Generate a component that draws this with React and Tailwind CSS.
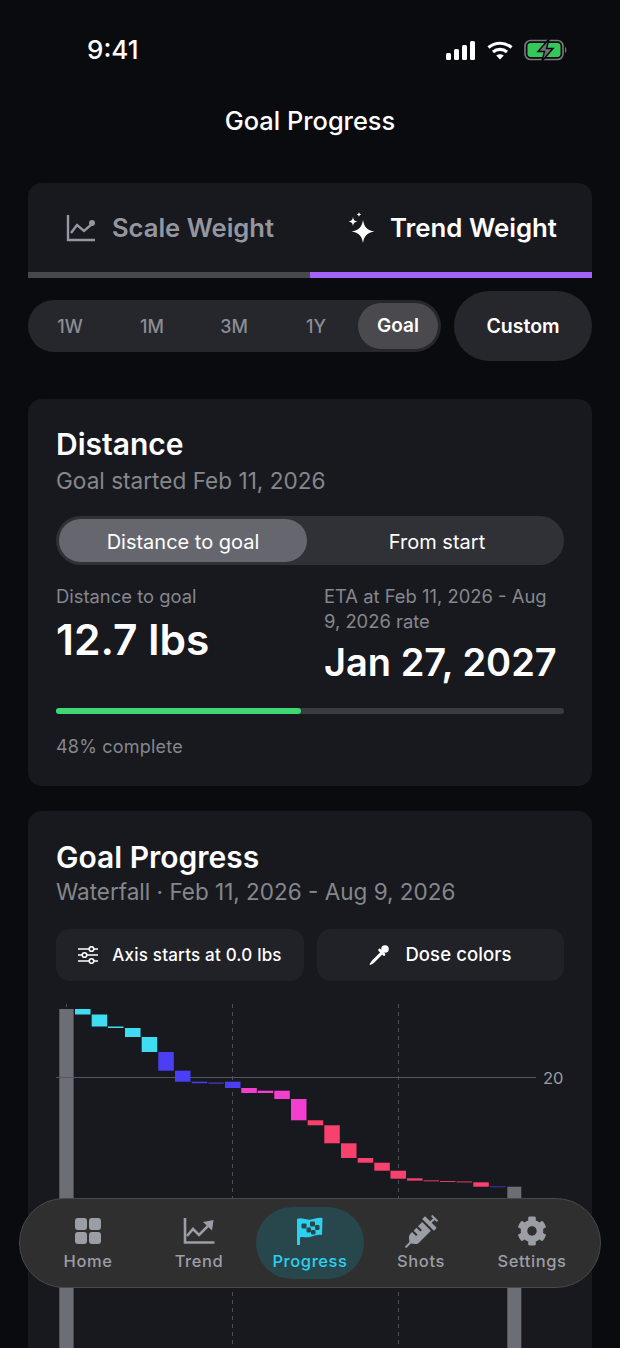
import React from "react";
import { FaCog, FaSyringe } from "react-icons/fa";

const font = { fontFamily: "Inter, sans-serif" };

const ranges = ["1W", "1M", "3M", "1Y"];

// [x, y, w, h, colour] in chart coordinates (chart box starts at page 56,1000)
const cyan = "#3fdcf2";
const blue = "#4a3ff5";
const pink = "#f23fd0";
const red = "#f9416f";
const bars = [
  [19, 9, 15.5, 5.5, cyan],
  [35.7, 14.5, 15.5, 12, cyan],
  [52, 26.5, 15.5, 1.5, cyan],
  [69, 28, 15.5, 9, cyan],
  [85.7, 37, 15.5, 15, cyan],
  [102.3, 52, 15.5, 18.7, blue],
  [119, 70.7, 15.5, 11, blue],
  [135.7, 81.7, 15.5, 1.5, blue],
  [152.3, 82.6, 15.5, 1, blue],
  [169, 81.7, 15.5, 6.3, blue],
  [185.3, 88, 15.5, 5, pink],
  [201.7, 90.7, 15.5, 2.3, pink],
  [218.3, 90.7, 15.5, 8.3, pink],
  [235, 99, 15.5, 21.3, pink],
  [251.7, 120.3, 15.5, 5, red],
  [268.3, 125.3, 15.5, 18, red],
  [285, 143.3, 15.5, 14.7, red],
  [301.7, 158, 15.5, 4.7, red],
  [318.3, 162.7, 15.5, 8, red],
  [334.5, 170.7, 15.5, 8, red],
  [351, 178.3, 15.5, 2.3, red],
  [367.5, 180.4, 15.5, 0.9, red],
  [384, 181, 15.5, 0.9, red],
  [400.5, 181.5, 15.5, 0.9, red],
  [417.3, 182.3, 15.5, 4.4, red],
  [434, 186.5, 15.5, 0.7, blue],
];

function StatusIcons() {
  return (
    <div className="flex items-center gap-[11px]">
      <svg width="30" height="19" viewBox="0 0 30 19" fill="white">
        <rect x="0" y="12" width="5" height="7" rx="1.5" />
        <rect x="8" y="8" width="5" height="11" rx="1.5" />
        <rect x="16" y="4" width="5" height="15" rx="1.5" />
        <rect x="24" y="0" width="5" height="19" rx="1.5" />
      </svg>
      <svg width="26" height="19" viewBox="0 0 26 19" fill="none" stroke="white" strokeWidth="3.2">
        <path d="M1.5 6.5C8 .8 18 .8 24.500 6.500" />
        <path d="M6 11c4-3.400 10-3.400 14 0" />
        <path d="M13 18.500l-3.800-3.900c2.200-1.700 5.400-1.700 7.600 0z" fill="white" stroke="none" />
      </svg>
      <svg width="43" height="22" viewBox="0 0 43 22">
        <rect x="1" y="1.500" width="38" height="19" rx="5.500" fill="none" stroke="#77797c" strokeWidth="1.600" />
        <rect x="3.500" y="4" width="33" height="14" rx="3.200" fill="#35c759" />
        <path d="M41 8c1.800.5 1.800 5.500 0 6z" fill="#77797c" />
        <path d="M25 0l-11 12.500h6.500L18 22l11-12.500h-6.500z" fill="#6f7173" stroke="#0a0b0e" strokeWidth="1.500" />
      </svg>
    </div>
  );
}

function SparkleIcon() {
  return (
    <svg width="28" height="32" viewBox="0 0 28 32" fill="white">
      <path d="M15 8c1.200 7.200 4.200 10.200 11.500 11.500C19.200 20.800 16.200 23.800 15 31c-1.200-7.200-4.200-10.200-11.500-11.500C10.800 18.200 13.800 15.200 15 8z" />
      <path d="M5 5c.5 3 1.500 4 4.500 4.500C6.500 10 5.500 11 5 14c-.5-3-1.500-4-4.500-4.500C3.500 9 4.500 8 5 5z" />
      <path d="M11 0c.3 1.600.8 2.100 2.400 2.400C11.800 2.700 11.300 3.200 11 4.800c-.3-1.600-.8-2.100-2.400-2.400C10.200 2.100 10.700 1.600 11 0z" />
    </svg>
  );
}

function ScaleIcon() {
  return (
    <svg width="30" height="28" viewBox="0 0 30 28" fill="none" stroke="#9496a0" strokeWidth="2.400">
      <path d="M2 1v25h27" />
      <path d="M5 19l6-8 7 6 8-7" />
      <circle cx="26" cy="9" r="1.800" fill="#9496a0" />
    </svg>
  );
}

function SlidersIcon() {
  return (
    <svg width="20" height="18" viewBox="0 0 20 18" fill="none" stroke="white" strokeWidth="1.600">
      <path d="M0 3h11M16 3h4M0 9h4M9 9h11M0 15h11M16 15h4" />
      <circle cx="13.500" cy="3" r="2.300" />
      <circle cx="6.500" cy="9" r="2.300" />
      <circle cx="13.500" cy="15" r="2.300" />
    </svg>
  );
}

function DropperIcon() {
  return (
    <svg width="20" height="20" viewBox="0 0 20 20" fill="white">
      <circle cx="16" cy="4" r="3.800" />
      <path d="M10.500 5l4.500 4.500" stroke="white" strokeWidth="2.600" strokeLinecap="round" />
      <path d="M12 7.500L3.500 16 1 19.500 4.500 17.500 13 9z" stroke="white" strokeWidth="1.200" />
    </svg>
  );
}

function TrendIcon() {
  return (
    <svg width="32" height="28" viewBox="0 0 32 28" fill="none" stroke="#9c9ea6" strokeWidth="2.600">
      <path d="M2 1v24.500h29.500" />
      <path d="M4 19l6-7 6 6 10-10" />
      <path d="M20 5l10.500-2L29 13.500z" fill="#9c9ea6" stroke="none" />
    </svg>
  );
}

function HomeIcon() {
  return (
    <svg width="26" height="26" viewBox="0 0 26 26" fill="#9c9ea6">
      <rect x="0" y="0" width="12" height="12" rx="3" />
      <rect x="14" y="0" width="12" height="12" rx="3" />
      <rect x="0" y="14" width="12" height="12" rx="3" />
      <rect x="14" y="14" width="12" height="12" rx="3" />
    </svg>
  );
}

function FlagIcon() {
  return (
    <svg width="26" height="28" viewBox="0 0 26 28">
      <path
        d="M0 2C5 0 9 3.500 14 2.500 18 1.700 22 0 25.500 1.200L25 18C21 17 17 19 13 20 9 21 6 19 3 20.500V28H0z"
        fill="#2fd0ee"
      />
      <g fill="#27474d">
        <rect x="4.500" y="6.500" width="5" height="5" rx="1" />
        <rect x="13" y="4.500" width="5" height="5" rx="1" />
        <rect x="9.500" y="10.500" width="4.500" height="5" rx="1" />
        <rect x="18" y="8" width="4.500" height="5" rx="1" />
        <rect x="14" y="13" width="4.500" height="4.500" rx="1" />
      </g>
    </svg>
  );
}

function NavItem({ label, active, children }) {
  return (
    <div
      className={`h-[72px] w-[108px] flex flex-col items-center justify-end pb-[8px] rounded-[36px] ${
        active ? "bg-[#27474d] text-[#2fd0ee]" : "text-[#9c9ea6]"
      }`}
    >
      <div className="h-[30px] flex items-center justify-center">{children}</div>
      <span className="mt-[5px] text-[16.500px] leading-[20px] font-medium tracking-[0.6px]">{label}</span>
    </div>
  );
}

function Chart() {
  return (
    <div className="mt-[19px] h-[400px]">
      <svg width="510" height="400" viewBox="0 0 510 400">
        <path d="M176.500 4V400M342.500 4V400" stroke="#4d4f54" strokeWidth="1" strokeDasharray="4 4" />
        <path d="M10.500 4v3" stroke="#4d4f54" />
        <rect x="3.300" y="9" width="14.300" height="391" fill="#6c6e76" />
        <rect x="451.300" y="186.700" width="14" height="214" fill="#6c6e76" />
        <path d="M0 77.500H480" stroke="#55575b" strokeWidth="1" />
        {bars.map(([x, y, w, h, color], i) => (
          <rect key={i} x={x} y={y} width={w} height={h} fill={color} />
        ))}
        <text x="487" y="84" fill="#9a9ca2" fontSize="16.500" fontFamily="Inter, sans-serif">20</text>
      </svg>
    </div>
  );
}

export default function App() {
  return (
    <div style={font} className="relative w-[620px] h-[1348px] overflow-hidden bg-[#0a0b0e] text-white">
      <div className="h-[100px] pl-[87px] pr-[53px] flex items-center justify-between">
        <span className="text-[26px] leading-[32px] font-medium">9:41</span>
        <StatusIcons />
      </div>

      <h1 className="-mt-px text-center text-[25.400px] leading-[44px] font-medium">Goal Progress</h1>

      <div className="mx-[28px] mt-[40px]">
        <div className="h-[95px] bg-[#18191e] rounded-t-[14px] flex flex-col">
          <div className="flex-1 flex">
            <div className="w-1/2 flex items-center justify-center gap-[16px] text-[#9496a0] pl-[2px]">
              <ScaleIcon />
              <span className="text-[25.600px] font-semibold pt-[2px]">Scale Weight</span>
            </div>
            <div className="w-1/2 flex items-center justify-center gap-[14px] pl-[3px]">
              <SparkleIcon />
              <span className="text-[25.800px] font-semibold pt-[2px]">Trend Weight</span>
            </div>
          </div>
          <div className="flex h-[6px]">
            <div className="w-1/2 bg-[#47484c]" />
            <div className="w-1/2 bg-[#a463f8]" />
          </div>
        </div>

        <div className="mt-[13px] flex items-center gap-[13px]">
          <div className="w-[413px] h-[52px] rounded-full bg-[#26272c] flex items-center pl-[1px] pr-[3px]">
            {ranges.map((r) => (
              <span key={r} className="w-[82px] text-center text-[18px] font-medium text-[#8b8d93] pt-px">{r}</span>
            ))}
            <span className="w-[80px] h-[46px] ml-[1px] rounded-full bg-[#49494e] flex items-center justify-center text-[19px] font-semibold pt-px">Goal</span>
          </div>
          <div className="w-[139px] h-[70px] rounded-full bg-[#26272c] flex items-center justify-center text-[19.500px] font-semibold pt-px">Custom</div>
        </div>

        <div className="mt-[38px] h-[387px] bg-[#18191e] rounded-[14px] px-[28px] pt-[27px]">
          <h2 className="text-[30px] leading-[36px] font-semibold">Distance</h2>
          <p className="mt-[1px] text-[22.600px] leading-[36px] text-[#85878d]">Goal started Feb 11, 2026</p>

          <div className="mt-[17px] h-[49px] rounded-full bg-[#303137] flex items-center p-[3px] text-[20px]">
            <div className="w-[248px] h-[43px] rounded-full bg-[#66676e] flex items-center justify-center pt-[2px]">Distance to goal</div>
            <div className="flex-1 text-center pt-[2px] pl-[6px]">From start</div>
          </div>

          <div className="mt-[19px] flex">
            <div className="w-[268px] shrink-0">
              <p className="text-[18.400px] leading-[25px] text-[#85878d]">Distance to goal</p>
              <p className="mt-[6px] text-[42.500px] leading-[50px] font-semibold">12.7 lbs</p>
            </div>
            <div className="flex-1 min-w-0 pr-[10px]">
              <p className="text-[18.400px] leading-[25px] text-[#85878d]">ETA at Feb 11, 2026 - Aug 9, 2026 rate</p>
              <p className="mt-[5px] text-[38px] leading-[46px] font-semibold whitespace-nowrap">Jan 27, 2027</p>
            </div>
          </div>

          <div className="mt-[23px] h-[6px] rounded-full bg-[#3a3b40]">
            <div className="h-full w-[245px] rounded-full bg-[#3fd773]" />
          </div>
          <p className="mt-[20px] text-[18px] leading-[25px] text-[#85878d] tracking-[0.2px]">48% complete</p>
        </div>

        <div className="mt-[25px] h-[560px] bg-[#18191e] rounded-t-[14px] px-[28px] pt-[28px]">
          <h2 className="text-[30px] leading-[36px] font-semibold">Goal Progress</h2>
          <p className="-mt-px text-[22.500px] leading-[36px] text-[#85878d]">Waterfall · Feb 11, 2026 - Aug 9, 2026</p>

          <div className="mt-[19px] flex gap-[13px]">
            <div className="w-[248px] h-[52px] rounded-[14px] bg-[#212227] flex items-center justify-center gap-[14px]">
              <SlidersIcon />
              <span className="text-[17px] font-medium tracking-[0.2px] pt-px">Axis starts at 0.0 lbs</span>
            </div>
            <div className="flex-1 h-[52px] rounded-[14px] bg-[#212227] flex items-center justify-center gap-[16px]">
              <DropperIcon />
              <span className="text-[18.500px] font-medium tracking-[0.1px]">Dose colors</span>
            </div>
          </div>

          <Chart />
        </div>
      </div>

      <div className="absolute left-[19px] top-[1198px] w-[582px] h-[90px] rounded-[45px] bg-[#2f2f30] border border-[#48494b] flex items-center justify-center gap-[3px]">
        <NavItem label="Home"><HomeIcon /></NavItem>
        <NavItem label="Trend"><TrendIcon /></NavItem>
        <NavItem label="Progress" active><FlagIcon /></NavItem>
        <NavItem label="Shots"><FaSyringe size={33} /></NavItem>
        <NavItem label="Settings"><FaCog size={30} /></NavItem>
      </div>
    </div>
  );
}
